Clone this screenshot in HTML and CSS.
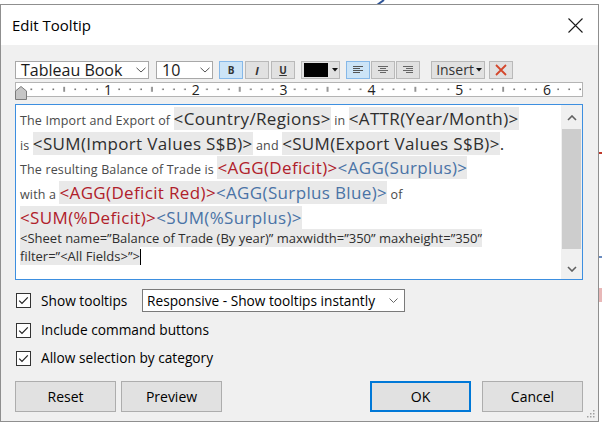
FILE: index.html
```html
<!DOCTYPE html>
<html>
<head>
<meta charset="utf-8">
<title>Edit Tooltip</title>
<link rel="stylesheet" href="styles.css">
</head>
<body>
<svg class="bg-mark bg-top" width="12" height="5" viewBox="0 0 12 5"><line x1="1" y1="5" x2="8" y2="0" stroke="#2f5597" stroke-width="2"/></svg>
<div class="bg-mark bg-red1"></div>
<div class="bg-mark bg-red2"></div>
<div class="bg-mark bg-blue1"></div>

<div class="dialog">
  <div class="titlebar">
    <span class="title">Edit Tooltip</span>
    <svg class="close" width="15" height="15" viewBox="0 0 15 15"><path d="M0.5 0.5 L14.5 14.5 M14.5 0.5 L0.5 14.5" stroke="#1a1a1a" stroke-width="1.1" fill="none"/></svg>
  </div>

  <div class="content">
    <div class="toolbar">
      <div class="combo font-combo"><span>Tableau Book</span><svg class="chev" width="10" height="6" viewBox="0 0 10 6"><polyline points="0.5,0.8 5,5 9.5,0.8" fill="none" stroke="#555" stroke-width="1"/></svg></div>
      <div class="combo size-combo"><span>10</span><svg class="chev" width="10" height="6" viewBox="0 0 10 6"><polyline points="0.5,0.8 5,5 9.5,0.8" fill="none" stroke="#555" stroke-width="1"/></svg></div>
      <div class="tgroup biu">
        <div class="tbtn on"><span class="g-b">B</span></div>
        <div class="tbtn"><span class="g-i">I</span></div>
        <div class="tbtn"><span class="g-u">U</span></div>
      </div>
      <div class="tbtn color-btn"><span class="swatch"></span><svg width="6" height="4" viewBox="0 0 6 4"><polygon points="0,0 6,0 3,3.5" fill="#111"/></svg></div>
      <div class="tgroup align">
        <div class="tbtn on"><svg width="10" height="8" viewBox="0 0 10 8"><path d="M0 0.5H10M0 2.5H7M0 4.5H10M0 6.5H7" stroke="#555" stroke-width="1"/></svg></div>
        <div class="tbtn"><svg width="10" height="8" viewBox="0 0 10 8"><path d="M0 0.5H10M2 2.5H8M0 4.5H10M2 6.5H8" stroke="#666" stroke-width="1"/></svg></div>
        <div class="tbtn"><svg width="10" height="8" viewBox="0 0 10 8"><path d="M0 0.5H10M3 2.5H10M0 4.5H10M3 6.5H10" stroke="#666" stroke-width="1"/></svg></div>
      </div>
      <div class="tbtn insert"><span>Insert</span><svg width="6" height="4" viewBox="0 0 6 4"><polygon points="0,0 6,0 3,3.5" fill="#111"/></svg></div>
      <div class="tbtn clear"><svg width="12" height="12" viewBox="0 0 12 12"><path d="M1 1L11 11M11 1L1 11" stroke="#d4472c" stroke-width="1.8"/></svg></div>
    </div>

    <div class="ruler">
      <svg class="ruler-scale" width="566" height="13" viewBox="0 0 566 13">
        <defs>
          <pattern id="marks" x="4.2" y="0" width="87.8" height="13" patternUnits="userSpaceOnUse">
            <rect x="10.5" y="5.5" width="1.2" height="1.6" fill="#444"/>
            <rect x="21.5" y="5.5" width="1.2" height="1.6" fill="#444"/>
            <rect x="32.5" y="5.5" width="1.2" height="1.6" fill="#444"/>
            <rect x="43.4" y="3.8" width="1.1" height="5" fill="#444"/>
            <rect x="54.4" y="5.5" width="1.2" height="1.6" fill="#444"/>
            <rect x="65.4" y="5.5" width="1.2" height="1.6" fill="#444"/>
            <rect x="76.4" y="5.5" width="1.2" height="1.6" fill="#444"/>
          </pattern>
        </defs>
        <rect x="0" y="0" width="566" height="13" fill="url(#marks)"/>
      </svg>
      <div class="ruler-nums">
        <span class="rn n1">1</span>
        <span class="rn n2">2</span>
        <span class="rn n3">3</span>
        <span class="rn n4">4</span>
        <span class="rn n5">5</span>
        <span class="rn n6">6</span>
      </div>
      <svg class="indent" width="12" height="14" viewBox="0 0 12 14"><polygon points="0.5,5 6,0.5 11.5,5 11.5,13.5 0.5,13.5" fill="#c6c6c6" stroke="#7c7c7c" stroke-width="1"/></svg>
    </div>

    <div class="editor">
      <div class="text">
        <div class="l"><span class="s">The Import and Export of </span><span class="f">&lt;Country/Regions&gt;</span><span class="s"> in </span><span class="f">&lt;ATTR(Year/Month)&gt;</span></div>
        <div class="l"><span class="s">is </span><span class="f">&lt;SUM(Import Values S$B)&gt;</span><span class="s"> and </span><span class="f">&lt;SUM(Export Values S$B)&gt;</span><span class="p">.</span></div>
        <div class="l"><span class="s">The resulting Balance of Trade is </span><span class="f r">&lt;AGG(Deficit)&gt;</span><span class="f b">&lt;AGG(Surplus)&gt;</span></div>
        <div class="l"><span class="s">with a </span><span class="f r">&lt;AGG(Deficit Red)&gt;</span><span class="f b">&lt;AGG(Surplus Blue)&gt;</span><span class="s"> of</span></div>
        <div class="l"><span class="f r">&lt;SUM(%Deficit)&gt;</span><span class="f b">&lt;SUM(%Surplus)&gt;</span></div>
        <div class="sl"><span class="f2">&lt;Sheet name=”Balance of Trade (By year)” maxwidth=”350” maxheight=”350”</span></div>
        <div class="sl"><span class="f2">filter=”&lt;All Fields&gt;”&gt;</span><span class="caret"></span></div>
      </div>
      <div class="scrollbar">
        <div class="sb-btn up"><svg width="10" height="6" viewBox="0 0 10 6"><polyline points="1,5 5,1 9,5" fill="none" stroke="#606060" stroke-width="1.6"/></svg></div>
        <div class="sb-track"><div class="thumb"></div></div>
        <div class="sb-btn down"><svg width="10" height="6" viewBox="0 0 10 6"><polyline points="1,1 5,5 9,1" fill="none" stroke="#606060" stroke-width="1.6"/></svg></div>
      </div>
    </div>

    <div class="options">
      <div class="opt first">
        <span class="check"><svg width="13" height="13" viewBox="0 0 13 13"><polyline points="2.2,6.6 5,9.4 10.8,3.4" fill="none" stroke="#222" stroke-width="1.2"/></svg></span>
        <span class="label fixed">Show tooltips</span>
        <div class="select"><span>Responsive - Show tooltips instantly</span><svg width="9" height="5" viewBox="0 0 9 5"><polyline points="0.5,0.5 4.5,4.5 8.5,0.5" fill="none" stroke="#666" stroke-width="1"/></svg></div>
      </div>
      <div class="opt">
        <span class="check"><svg width="13" height="13" viewBox="0 0 13 13"><polyline points="2.2,6.6 5,9.4 10.8,3.4" fill="none" stroke="#222" stroke-width="1.2"/></svg></span>
        <span class="label">Include command buttons</span>
      </div>
      <div class="opt">
        <span class="check"><svg width="13" height="13" viewBox="0 0 13 13"><polyline points="2.2,6.6 5,9.4 10.8,3.4" fill="none" stroke="#222" stroke-width="1.2"/></svg></span>
        <span class="label">Allow selection by category</span>
      </div>
    </div>

    <div class="actions">
      <div class="bgroup left">
        <div class="btn">Reset</div>
        <div class="btn">Preview</div>
      </div>
      <div class="bgroup right">
        <div class="btn default">OK</div>
        <div class="btn">Cancel</div>
      </div>
    </div>
  </div>

  <svg class="grip" width="9" height="9" viewBox="0 0 9 9">
    <rect x="7" y="1" width="1.5" height="1.5" fill="#a0a0a0"/>
    <rect x="4" y="4" width="1.5" height="1.5" fill="#a0a0a0"/>
    <rect x="7" y="4" width="1.5" height="1.5" fill="#a0a0a0"/>
    <rect x="1" y="7" width="1.5" height="1.5" fill="#a0a0a0"/>
    <rect x="4" y="7" width="1.5" height="1.5" fill="#a0a0a0"/>
    <rect x="7" y="7" width="1.5" height="1.5" fill="#a0a0a0"/>
  </svg>
</div>
</body>
</html>
```

FILE: styles.css
```css
* { box-sizing: border-box; }
html, body { margin: 0; padding: 0; }
body {
  width: 602px;
  height: 426px;
  overflow: hidden;
  background: #fff;
  position: relative;
  font-family: "Open Sans", "Noto Sans", sans-serif;
  color: #000;
}

/* bits of the chart behind the dialog */
.bg-mark { position: absolute; }
.bg-top { left: 376px; top: 0; }
.bg-red1 { left: 599px; top: 152px; width: 3px; height: 2px; background: #c0392b; }
.bg-red2 { left: 599px; top: 288px; width: 3px; height: 14px; background: #e8b8b8; }
.bg-blue1 { left: 599px; top: 256px; width: 3px; height: 2px; background: #6a8cc0; }

.dialog {
  position: relative;
  margin-top: 4px;
  width: 599px;
  height: 418px;
  border: 1px solid #8f8f8f;
  background: #f0f0f0;
  display: flex;
  flex-direction: column;
}

.titlebar {
  height: 40px;
  flex: none;
  background: #fff;
  display: flex;
  align-items: center;
  justify-content: space-between;
  padding: 0 15px 0 11px;
}
.title { font-size: 15px; line-height: 20px; color: #000; }
.close { display: block; margin-top: 1px; }

.content {
  flex: 1;
  padding: 16px 15px 0 14px;
}

/* toolbar */
.toolbar { display: flex; align-items: center; height: 18px; }
.combo {
  height: 18px;
  background: #fff;
  border: 1px solid #a8a8a8;
  display: flex;
  align-items: center;
  justify-content: space-between;
  padding: 0 2px 0 5px;
  font-size: 16px;
  line-height: 18px;
  color: #1a1a1a;
}
.combo .chev { display: block; }
.font-combo { width: 134px; }
.size-combo { width: 57px; margin-left: 7px; }

.tgroup { display: flex; gap: 2px; }
.biu { margin-left: 6px; }
.tbtn {
  height: 18px;
  width: 24px;
  background: #e1e1e1;
  border: 1px solid #b9b9b9;
  display: flex;
  align-items: center;
  justify-content: center;
  color: #333;
}
.tbtn svg { display: block; }
.tbtn.on { background: #cce4f7; border-color: #86b8e8; }
.g-b { font-size: 10px; font-weight: 700; line-height: 1; }
.g-i { font-size: 11px; font-weight: 700; font-style: italic; line-height: 1; }
.g-u { font-size: 10px; font-weight: 700; text-decoration: underline; line-height: 1; }

.color-btn { width: 39px; margin-left: 6px; justify-content: flex-start; padding-left: 2px; gap: 4px; }
.swatch { width: 24px; height: 14px; background: #000; display: block; }

.align { margin-left: 6px; gap: 1px; }

.insert { width: 54px; margin-left: 11px; gap: 2px; padding-left: 2px; }
.insert span { font-size: 14px; line-height: 16px; color: #333; }
.clear { margin-left: 4px; }

/* ruler */
.ruler {
  position: relative;
  margin-top: 3px;
  height: 15px;
  background: #fff;
  border: 1px solid #b4b4b4;
}
.ruler-scale { display: block; }
.ruler-nums {
  position: absolute;
  left: 0;
  top: 0;
  right: 0;
  height: 13px;
}
.rn {
  position: absolute;
  top: -1px;
  width: 12px;
  margin-left: -6px;
  text-align: center;
  font-size: 14px;
  line-height: 15px;
  color: #222;
}
.n1 { left: 92px; }
.n2 { left: 179.8px; }
.n3 { left: 267.6px; }
.n4 { left: 355.4px; }
.n5 { left: 443.2px; }
.n6 { left: 531px; }
.indent { position: absolute; left: -1px; top: 3px; display: block; }

/* editor */
.editor {
  margin-top: 7px;
  height: 176px;
  border: 1px solid #3d8fe0;
  background: #fff;
  display: flex;
}
.text {
  flex: 1;
  padding: 2px 0 0 4px;
  overflow: hidden;
  color: #2b2b2b;
}
.l {
  height: 24.7px;
  line-height: 24.7px;
  font-size: 17px;
  white-space: nowrap;
}
.s { font-size: 12.5px; line-height: 12px; letter-spacing: 0.15px; color: #4a4a4a; font-weight: 400; }
.f { background: #e9e9e9; color: #2e2e2e; font-weight: 500; letter-spacing: 0.35px; }
.p { color: #2e2e2e; }
.r { color: #b0202a; }
.b { color: #4a73a6; }
.sl {
  height: 17.3px;
  line-height: 17.3px;
  font-size: 13px;
  white-space: nowrap;
}
.f2 { background: #e9e9e9; color: #2e2e2e; font-weight: 500; }
.caret {
  display: inline-block;
  width: 1px;
  height: 16px;
  background: #000;
  vertical-align: -4px;
}

.scrollbar {
  width: 21px;
  flex: none;
  display: flex;
  flex-direction: column;
  background: #f0f0f0;
}
.sb-btn { height: 21px; display: flex; align-items: center; justify-content: center; }
.sb-btn.up { padding-top: 4px; }
.sb-btn svg { display: block; }
.sb-track { flex: 1; padding: 3px 1px 9px 1px; }
.thumb { height: 100%; background: #cdcdcd; }

/* options */
.options { margin-top: 9px; }
.opt { display: flex; align-items: center; height: 28px; }
.opt.first { height: 23px; margin-bottom: 4px; }
.check {
  width: 15px;
  height: 15px;
  flex: none;
  border: 1px solid #333;
  background: #fff;
  margin-left: 1px;
  margin-right: 10px;
  display: flex;
  align-items: center;
  justify-content: center;
}
.check svg { display: block; }
.label { font-size: 13.7px; line-height: 18px; color: #000; }
.label.fixed { width: 101px; }
.select {
  width: 263px;
  height: 23px;
  border: 1px solid #7a7a7a;
  background: #fff;
  display: flex;
  align-items: center;
  justify-content: space-between;
  padding: 0 6px 0 4px;
  font-size: 13.7px;
  color: #000;
}
.select svg { display: block; }

/* buttons */
.actions { margin-top: 9px; display: flex; justify-content: space-between; }
.bgroup { display: flex; }
.bgroup.left { gap: 5px; }
.bgroup.right { gap: 11px; }
.btn {
  width: 101px;
  height: 31px;
  background: #e1e1e1;
  border: 1px solid #adadad;
  font-size: 14px;
  color: #000;
  display: flex;
  align-items: center;
  justify-content: center;
}
.btn.default { border-color: #0078d7; box-shadow: inset 0 0 0 1px #0078d7; }

.grip { position: absolute; right: 3px; bottom: 3px; display: block; }
```
